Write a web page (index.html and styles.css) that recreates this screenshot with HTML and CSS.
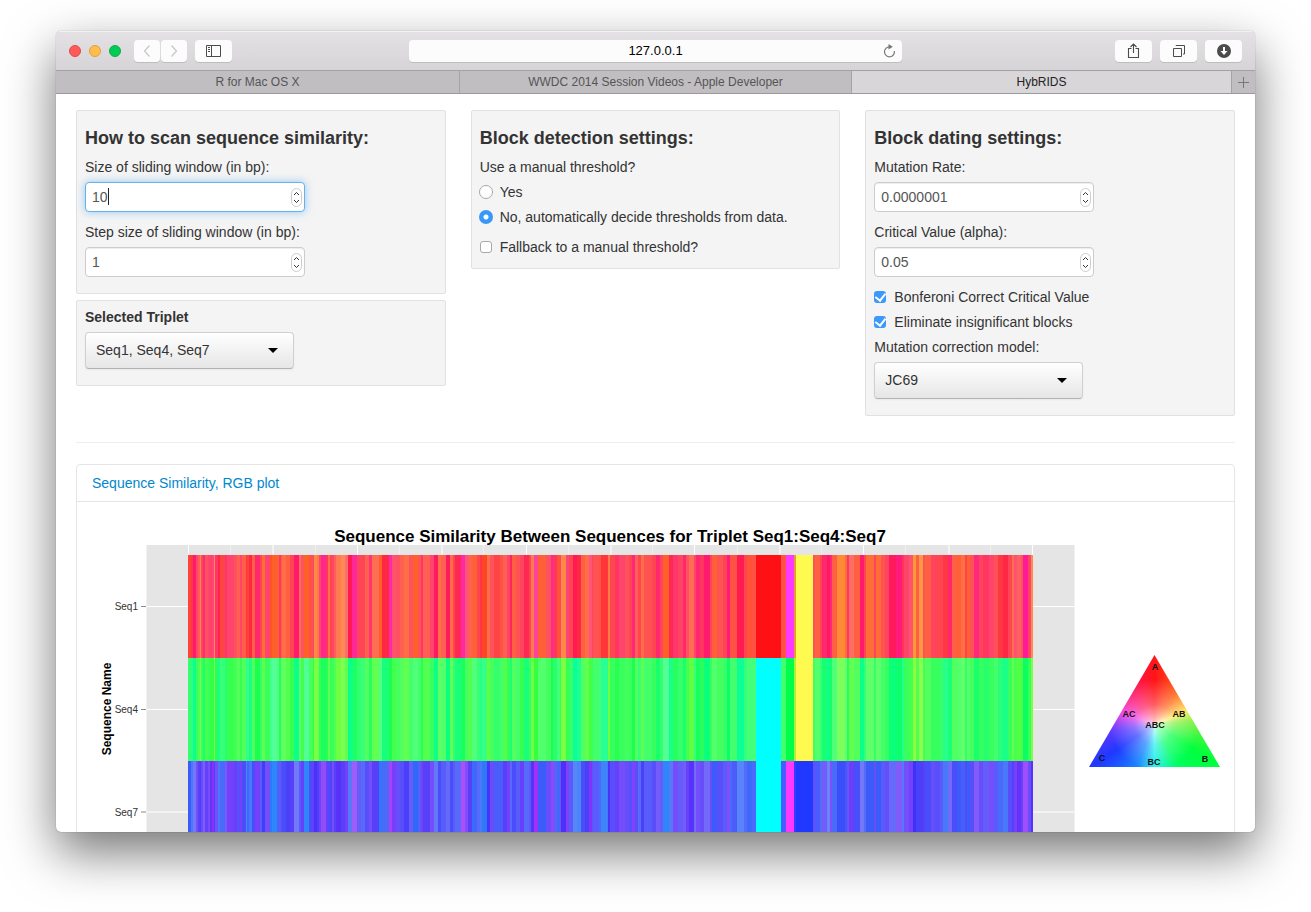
FILE: index.html
```html
<!DOCTYPE html>
<html lang="en">
<head>
<meta charset="utf-8">
<title>HybRIDS</title>
<link rel="stylesheet" href="styles.css">
</head>
<body>
<div class="window">
  <header class="toolbar">
    <div class="side">
      <div class="lights"><span class="light red"></span><span class="light amber"></span><span class="light green"></span></div>
      <div class="pair">
        <button class="tool nav" aria-label="Back"><svg width="8" height="12" viewBox="0 0 8 12"><path d="M6.5 .5 1.5 6l5 5.5" fill="none" stroke="#c9c9c9" stroke-width="1.3"/></svg></button>
        <button class="tool nav" aria-label="Forward"><svg width="8" height="12" viewBox="0 0 8 12"><path d="M1.5 .5 6.500 6l-5 5.500" fill="none" stroke="#c9c9c9" stroke-width="1.3"/></svg></button>
      </div>
      <button class="tool" aria-label="Show sidebar"><svg width="15" height="12" viewBox="0 0 15 12"><path d="M.5.5h14v11H.5zM5.500.5v11" fill="none" stroke="#4c4c4c"/><path d="M2 2.500h2M2 4.500h2M2 6.500h2" stroke="#4c4c4c"/></svg></button>
    </div>
    <div class="address">
      <input class="url" type="text" value="127.0.0.1" aria-label="Address">
      <button class="reload" aria-label="Reload"><svg width="13" height="14" viewBox="0 0 13 14"><path d="M6.500 2.800A5 5 0 1 0 11.400 7" fill="none" stroke="#777" stroke-width="1.200"/><path d="M5.500 0v5.500L9.800 2.800z" fill="#777"/></svg></button>
    </div>
    <div class="side end">
      <button class="tool" aria-label="Share"><svg width="13" height="16" viewBox="0 0 13 16"><path d="M4.500 5.500h-3v9h10v-9h-3M6.500 10V1.500M3.500 4l3-3 3 3" fill="none" stroke="#4c4c4c" stroke-width="1.100"/></svg></button>
      <button class="tool" aria-label="Show all tabs"><svg width="12" height="12" viewBox="0 0 12 12"><path d="M.5 3.500h8v8h-8zM3 1V.5h8.500V9H10" fill="none" stroke="#4c4c4c"/></svg></button>
      <button class="tool" aria-label="Downloads"><svg width="14" height="14" viewBox="0 0 14 14"><circle cx="7" cy="7" r="7" fill="#4c4c4c"/><path d="M6 3h2v4h2.500L7 11 3.500 7H6z" fill="#fff"/></svg></button>
    </div>
  </header>
  <nav class="tabs">
    <a class="tab first" href="#r">R for Mac OS X</a>
    <a class="tab second" href="#wwdc">WWDC 2014 Session Videos - Apple Developer</a>
    <a class="tab third current" href="#hybrids">HybRIDS</a>
    <button class="add" aria-label="New tab"><svg width="11" height="11" viewBox="0 0 11 11"><path d="M5.500 0v11M0 5.500h11" stroke="#777"/></svg></button>
  </nav>
  <main class="page">
    <div class="columns">
      <div class="column">
        <section class="well">
          <h4>How to scan sequence similarity:</h4>
          <label class="caption" for="win">Size of sliding window (in bp):</label>
          <div class="number focused"><input id="win" type="number" value="10"><span class="caret"></span><svg class="spin" viewBox="0 0 11 19"><rect x=".5" y=".5" width="10" height="18" rx="5"/><path d="M3 7l2.500-2.500L8 7M3 12l2.500 2.500L8 12"/></svg></div>
          <label class="caption" for="step">Step size of sliding window (in bp):</label>
          <div class="number"><input id="step" type="number" value="1"><svg class="spin" viewBox="0 0 11 19"><rect x=".5" y=".5" width="10" height="18" rx="5"/><path d="M3 7l2.500-2.500L8 7M3 12l2.500 2.500L8 12"/></svg></div>
        </section>
        <section class="well">
          <label class="caption strong" for="triplet">Selected Triplet</label>
          <div class="choice"><select id="triplet"><option>Seq1, Seq4, Seq7</option></select><svg class="arrow" viewBox="0 0 10 5"><path d="M0 0h10L5 5z"/></svg></div>
        </section>
      </div>
      <div class="column">
        <section class="well">
          <h4>Block detection settings:</h4>
          <div class="caption" id="manual">Use a manual threshold?</div>
          <div class="radios" role="radiogroup" aria-labelledby="manual">
            <label class="option"><input type="radio" name="manual">Yes</label>
            <label class="option"><input type="radio" name="manual" checked>No, automatically decide thresholds from data.</label>
          </div>
          <label class="option"><input type="checkbox">Fallback to a manual threshold?</label>
        </section>
      </div>
      <div class="column">
        <section class="well">
          <h4>Block dating settings:</h4>
          <label class="caption" for="rate">Mutation Rate:</label>
          <div class="number"><input id="rate" type="number" step="any" value="0.0000001"><svg class="spin" viewBox="0 0 11 19"><rect x=".5" y=".5" width="10" height="18" rx="5"/><path d="M3 7l2.500-2.500L8 7M3 12l2.500 2.500L8 12"/></svg></div>
          <label class="caption" for="alpha">Critical Value (alpha):</label>
          <div class="number"><input id="alpha" type="number" step="any" value="0.05"><svg class="spin" viewBox="0 0 11 19"><rect x=".5" y=".5" width="10" height="18" rx="5"/><path d="M3 7l2.500-2.500L8 7M3 12l2.500 2.500L8 12"/></svg></div>
          <label class="option"><input type="checkbox" checked>Bonferoni Correct Critical Value</label>
          <label class="option"><input type="checkbox" checked>Eliminate insignificant blocks</label>
          <label class="caption" for="model">Mutation correction model:</label>
          <div class="choice"><select id="model"><option>JC69</option></select><svg class="arrow" viewBox="0 0 10 5"><path d="M0 0h10L5 5z"/></svg></div>
        </section>
      </div>
    </div>
    <hr>
    <section class="panel">
      <div class="panel-head"><a href="#plot">Sequence Similarity, RGB plot</a></div>
      <svg class="plot" id="plot" viewBox="0 0 1157 420">
        <rect x="69" y="43" width="929" height="330" fill="#e5e5e5"/>
        <g id="grid"></g>
        <path d="M69.500 43v330M997.500 43v330" stroke="#f1f1f1"/>
        <path d="M69 104.500h929M69 207.500h929" stroke="#fff"/>
        <path d="M69 310h929" stroke="#f3f3f3" stroke-width="2"/>
        <path d="M64 104.500h5M64 207.500h5M64 310h5" stroke="#8a8a8a"/>
        <g id="bars" shape-rendering="crispEdges"></g>
        <text class="title" x="533" y="40">Sequence Similarity Between Sequences for Triplet Seq1:Seq4:Seq7</text>
        <text class="tick" x="61" y="108">Seq1</text>
        <text class="tick" x="61" y="211">Seq4</text>
        <text class="tick" x="61" y="314">Seq7</text>
        <text class="axis" transform="translate(34 207) rotate(-90)">Sequence Name</text>
        <foreignObject x="1012" y="153" width="131" height="112"><div class="wheel"></div></foreignObject>
        <g class="key">
          <text x="1078" y="168">A</text>
          <text x="1052" y="215">AC</text>
          <text x="1102" y="215">AB</text>
          <text x="1078" y="226">ABC</text>
          <text x="1025" y="259">C</text>
          <text x="1077" y="263">BC</text>
          <text x="1128" y="260">B</text>
        </g>
      </svg>
    </section>
  </main>
</div>
<script src="plot.js"></script>
</body>
</html>
```
FILE: plot.js
```js
// Each entry: bar width, then one hex digit each for the AB, AC and BC similarity.
// Recombinant blocks carry their three row colours after a colon instead.
const bars = `
3436 2348 3178 2475 2654 1944 2465 2286 3564 2475 2463 2483 1954 3375 2248 5447 2376 7474 3564 3655
2474 4645 1349 2437 3248 3645 5274 2456 3734 5475 2528 5629 2637 2375 1636 4745 4644 4454 5178 2756
3564 5629 4545 1483 3943 2844 2474 5295 2364 2745 2454 2475 2654 5853 4954 3774 4158 52a6 4466 4457
4655 3375 7754 3628 7247 32b4 4574 4565 4655 5744 4566 5627 3556 2374 7654 4475 4168 3745 5656 4167
3745 2456 6257 42b5 3585 4654 5637 3457 2348 5428 3743 4565 6446 3546 4654 3474 2257 4645 4556 4464
5257 2456 3853 44a3 8636 5565 22a4 4366 3537 1475 5943 3484 4456 4159 4249 4645 4744 3583 1465 6556
2547 6339 1348 2843 5455 4364 6475 4565 3455 3284 3655 3457 3744 8556 4455 4276 3466 6629 4258 5375
5466 3276 3564 5753 2477 4275 4365 6177 2465 5636 6555 4456 3185 2547 5546 7159 3457 5537 4547
25:ff1014,00ffff,00ffff 5546 8:ff38ff,00ff48,ff38ff 2:e0a030,b0f038,4038ff 17:fffa50,fffa50,2038ff
2565 5646 2457 5276 3169 2285 5647 8935 2736 2375 5764 6645 4178 2457 8736 2465 5736 4556 4465 7167
6186 2358 5475 4574 3a33 3644 4a44 2554 6645 4465 5455 3456 5348 4277 5645 4636 4746 2445 3636 4555
5286 4465 6366 5475 4556 5347 5248 4455 2754 3574 4663 2564 51a5 3465 2953`.trim().split(/\s+/);

const NS = "http://www.w3.org/2000/svg";
function rect(parent, x, y, width, height, fill) {
  const r = document.createElementNS(NS, "rect");
  for (const [k, v] of Object.entries({ x, y, width, height, fill })) r.setAttribute(k, v);
  parent.appendChild(r);
}

function level(digit, base) {
  return Math.round(base + (parseInt(digit, 16) - 5) * 14);
}

function rowColors(code) {
  const [ab, ac, bc] = code;
  return [
    `rgb(255, ${level(ab, 82)}, ${level(ac, 82)})`,
    `rgb(${level(ab, 68)}, 255, ${level(bc, 94)})`,
    `rgb(${level(ac, 88)}, ${level(bc, 78)}, 250)`,
  ];
}

const holder = document.getElementById("bars");
let x = 111;
for (const bar of bars) {
  const [head, list] = bar.split(":");
  const width = Number(list ? head : head.slice(0, -3));
  const fills = list ? list.split(",").map((c) => "#" + c) : rowColors(head.slice(-3));
  fills.forEach((fill, row) => rect(holder, x, 53 + row * 103, width, 103, fill));
  x += width;
}

const grid = document.getElementById("grid");
for (let i = 0; i <= 20; i++) {
  const gx = 111 + Math.round(i * 42.2);
  const major = i % 2 === 0;
  rect(grid, gx, 43, major && i % 4 ? 2 : 1, 330, major ? (i % 4 ? "#f3f3f3" : "#fff") : "#efefef");
}
```
FILE: styles.css
```css
* { box-sizing: border-box; }
body {
  margin: 0;
  height: 100vh;
  padding: 31px 56px 80px;
  overflow: hidden;
  background: #fff;
  color: #333;
  font: 14px/20px "Liberation Sans", Arial, sans-serif;
}
button { margin: 0; padding: 0; border: 0; font: inherit; }
.window {
  height: 100%;
  display: flex;
  flex-direction: column;
  overflow: hidden;
  border-radius: 5px;
  background: #fff;
  box-shadow: 0 0 1px rgba(0, 0, 0, .5), 0 20px 50px rgba(0, 0, 0, .55);
}
.toolbar {
  flex: none;
  height: 39px;
  padding: 0 13px;
  display: flex;
  align-items: center;
  background: linear-gradient(#e3e1e4, #d6d4d7);
  border-top: 1px solid #f3f2f3;
}
.side { flex: 1; display: flex; align-items: center; gap: 8px; }
.end { justify-content: flex-end; }
.lights { display: flex; gap: 8px; margin-right: 5px; }
.light { width: 12px; height: 12px; border-radius: 50%; border: 1px solid; }
.red { background: #ff5a5a; border-color: #e2484b; }
.amber { background: #ffbd4c; border-color: #dfa042; }
.green { background: #00cb55; border-color: #10ae47; }
.pair { display: flex; gap: 1px; }
.tool {
  width: 37px;
  height: 22px;
  display: grid;
  place-items: center;
  border-radius: 4px;
  background: #fcfcfc;
  box-shadow: 0 1px 0 #bebcbf;
}
.nav { width: 26px; }
.address { position: relative; width: 42%; }
.url {
  display: block;
  width: 100%;
  height: 22px;
  padding: 0 24px;
  border: 0;
  border-radius: 4px;
  background: #fcfcfc;
  box-shadow: 0 1px 0 #bebcbf;
  color: #000;
  text-align: center;
  font: 13px/22px "Liberation Sans", Arial, sans-serif;
}
.reload { position: absolute; top: 3px; right: 6px; width: 13px; height: 16px; background: none; }
.tabs {
  flex: none;
  display: flex;
  height: 24px;
  border-top: 1px solid #a3a1a4;
  border-bottom: 1px solid #9b999c;
  background: #c0bec1;
  font-size: 12px;
  line-height: 22px;
}
.tab { text-align: center; color: #555; text-decoration: none; border-right: 1px solid #a5a3a6; }
.first { flex: 404; }
.second { flex: 392; }
.third { flex: 380; }
.current { background: #d8d6d9; color: #222; }
.add { width: 23px; display: grid; place-items: center; background: none; }
.page { flex: 1; min-height: 0; overflow: hidden; padding: 16px 20px 0; }
.columns { display: grid; grid-template-columns: repeat(3, minmax(0, 1fr)); gap: 25px; }
.column { display: flex; flex-direction: column; gap: 6px; }
.well { padding: 6px 8px; border: 1px solid #e1e1e1; border-radius: 2px; background: #f4f4f4; }
h4 { margin: 11px 0 9px; font-size: 18px; line-height: 20px; }
.caption { display: block; margin-bottom: 5px; }
.strong { font-weight: bold; }
.number { position: relative; width: 220px; margin-bottom: 10px; }
.number input {
  display: block;
  width: 100%;
  height: 30px;
  padding: 4px 6px;
  border: 1px solid #ccc;
  border-radius: 4px;
  outline: 0;
  background: #fff;
  box-shadow: inset 0 1px 1px rgba(0, 0, 0, .075);
  color: #555;
  font: inherit;
  appearance: textfield;
}
.number input::-webkit-inner-spin-button { appearance: none; }
.focused input { border-color: #66b1ec; box-shadow: 0 0 8px rgba(82, 168, 236, .6); }
.caret { position: absolute; left: 23px; top: 6px; width: 1px; height: 17px; background: #222; }
.spin { position: absolute; right: 3px; top: 6px; width: 11px; height: 19px; fill: none; stroke: #333; }
.spin rect { fill: #fff; stroke: #ccc; }
.choice { position: relative; width: 209px; margin-bottom: 10px; }
.choice select {
  display: block;
  width: 100%;
  height: 37px;
  padding: 0 10px 2px;
  border: 1px solid #d0d0d0;
  border-bottom-color: #b3b3b3;
  border-radius: 4px;
  background: linear-gradient(#fff, #e6e6e6);
  box-shadow: 0 1px 2px rgba(0, 0, 0, .05);
  color: #333;
  font: inherit;
  appearance: none;
}
.arrow { position: absolute; right: 16px; top: 16px; width: 10px; height: 5px; }
.option { display: flex; align-items: center; margin-bottom: 5px; }
.radios { margin-bottom: 10px; }
.option input {
  appearance: none;
  flex: none;
  width: 12px;
  height: 12px;
  margin: 0 8px 0 0;
  border: 1px solid #a8a8a8;
  border-radius: 3px;
  background: #fff;
}
.option input[type="radio"] { width: 14px; height: 14px; margin: 0 7px 0 -1px; border-radius: 50%; }
.option input[type="radio"]:checked { border: 0; background: radial-gradient(circle, #fff 2px, #3898f8 3px); }
.option input[type="checkbox"]:checked { display: grid; place-items: center; border: 0; background: #3b99fc; }
.option input[type="checkbox"]:checked::after {
  content: "";
  width: 5px;
  height: 8px;
  margin-bottom: 2px;
  border: solid #fff;
  border-width: 0 2px 2px 0;
  transform: rotate(38deg);
}
hr { margin: 26px 0 21px; border: 0; border-top: 1px solid #eee; }
.panel { border: 1px solid #e5e5e5; border-radius: 4px; }
.panel-head { padding: 8px 15px; border-bottom: 1px solid #e5e5e5; }
.panel-head a { color: #08c; text-decoration: none; }
.plot { display: block; width: 100%; }
.title { font-size: 17px; font-weight: bold; text-anchor: middle; fill: #000; }
.tick { font-size: 10px; text-anchor: end; fill: #333; }
.axis { font-size: 12px; font-weight: bold; text-anchor: middle; fill: #000; }
.key { font-size: 9px; font-weight: bold; text-anchor: middle; fill: #111; }
.wheel {
  width: 131px;
  height: 112px;
  clip-path: polygon(50% 0, 100% 100%, 0 100%);
  background:
    radial-gradient(circle at 50% 62%, rgba(255, 255, 255, .8), rgba(255, 255, 255, .3) 20px, rgba(255, 255, 255, 0) 45px),
    conic-gradient(from 0deg at 50% 62%, #ff1418 0deg, #ff6a20 35deg, #ffe650 68deg, #80f040 85deg, #00ff3c 122deg, #00ff60 150deg, #20f0f0 180deg, #1888ff 202deg, #2038ff 236deg, #6038ff 262deg, #f030e0 290deg, #ff1870 322deg, #ff1418 360deg);
}
```
